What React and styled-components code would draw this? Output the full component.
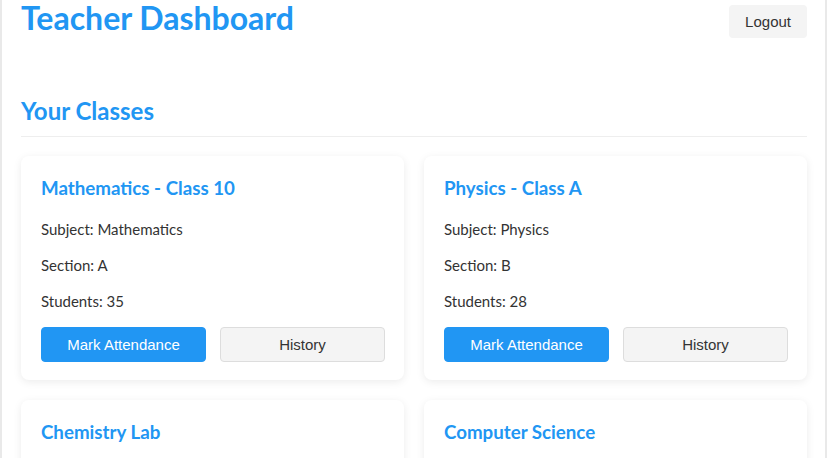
import React from 'react';
import styled, { createGlobalStyle } from 'styled-components';

const FONT = 'Lato, "Open Sans", sans-serif';
const BUTTON_FONT = '"Liberation Sans", Arial, sans-serif';
const BLUE = '#2196f3';

const GlobalStyle = createGlobalStyle`
  * { box-sizing: border-box; }
  body {
    margin: 0;
    background: #e9e9e9;
    font-family: ${FONT};
    color: #333;
  }
`;

const Page = styled.div`
  margin: 0 2px;
  min-height: 100vh;
  background: #fff;
  padding: 0 18px 20px 19px;
`;

const Header = styled.header`
  display: flex;
  justify-content: space-between;
  align-items: flex-start;
`;

const Title = styled.h1`
  margin: 0;
  color: ${BLUE};
  font-size: 32px;
  font-weight: 700;
  line-height: 36px;
`;

const LogoutButton = styled.button`
  margin-top: 5px;
  padding: 8px 16px;
  border: none;
  border-radius: 4px;
  background: #f4f4f4;
  color: #333;
  font-family: ${BUTTON_FONT};
  font-size: 15px;
  line-height: 17px;
  cursor: pointer;
`;

const SectionTitle = styled.h2`
  margin: 57px 0 19px;
  padding-bottom: 9px;
  border-bottom: 1px solid #eee;
  color: ${BLUE};
  font-size: 24px;
  font-weight: 700;
  line-height: 32px;
`;

const Grid = styled.div`
  display: grid;
  grid-template-columns: repeat(2, 1fr);
  gap: 20px;
`;

const Card = styled.div`
  background: #fff;
  border-radius: 8px;
  box-shadow: 0 2px 8px rgba(0, 0, 0, 0.08);
  padding: 20px 19px 18px 20px;
`;

const CardTitle = styled.h3`
  margin: 0 0 18px;
  color: ${BLUE};
  font-size: 18.72px;
  font-weight: 700;
  line-height: 25px;
`;

const Info = styled.p`
  margin: 0 0 16px;
  font-size: 15px;
  line-height: 20px;
`;

const Actions = styled.div`
  display: flex;
  gap: 14px;
`;

const ActionButton = styled.button`
  flex: 1;
  padding: 8px 12px;
  border: 1px solid ${(p) => (p.$primary ? BLUE : '#ddd')};
  border-radius: 4px;
  background: ${(p) => (p.$primary ? BLUE : '#f4f4f4')};
  color: ${(p) => (p.$primary ? '#fff' : '#333')};
  font-family: ${BUTTON_FONT};
  font-size: 15px;
  line-height: 17px;
  cursor: pointer;
`;

const classes = [
  { name: 'Mathematics - Class 10', subject: 'Mathematics', section: 'A', students: 35 },
  { name: 'Physics - Class A', subject: 'Physics', section: 'B', students: 28 },
  { name: 'Chemistry Lab', subject: 'Chemistry', section: 'C', students: 30 },
  { name: 'Computer Science', subject: 'Computer Science', section: 'A', students: 32 },
];

export default function App() {
  return (
    <>
      <GlobalStyle />
      <Page>
        <Header>
          <Title>Teacher Dashboard</Title>
          <LogoutButton>Logout</LogoutButton>
        </Header>
        <SectionTitle>Your Classes</SectionTitle>
        <Grid>
          {classes.map((c) => (
            <Card key={c.name}>
              <CardTitle>{c.name}</CardTitle>
              <Info>Subject: {c.subject}</Info>
              <Info>Section: {c.section}</Info>
              <Info>Students: {c.students}</Info>
              <Actions>
                <ActionButton $primary>Mark Attendance</ActionButton>
                <ActionButton>History</ActionButton>
              </Actions>
            </Card>
          ))}
        </Grid>
      </Page>
    </>
  );
}
